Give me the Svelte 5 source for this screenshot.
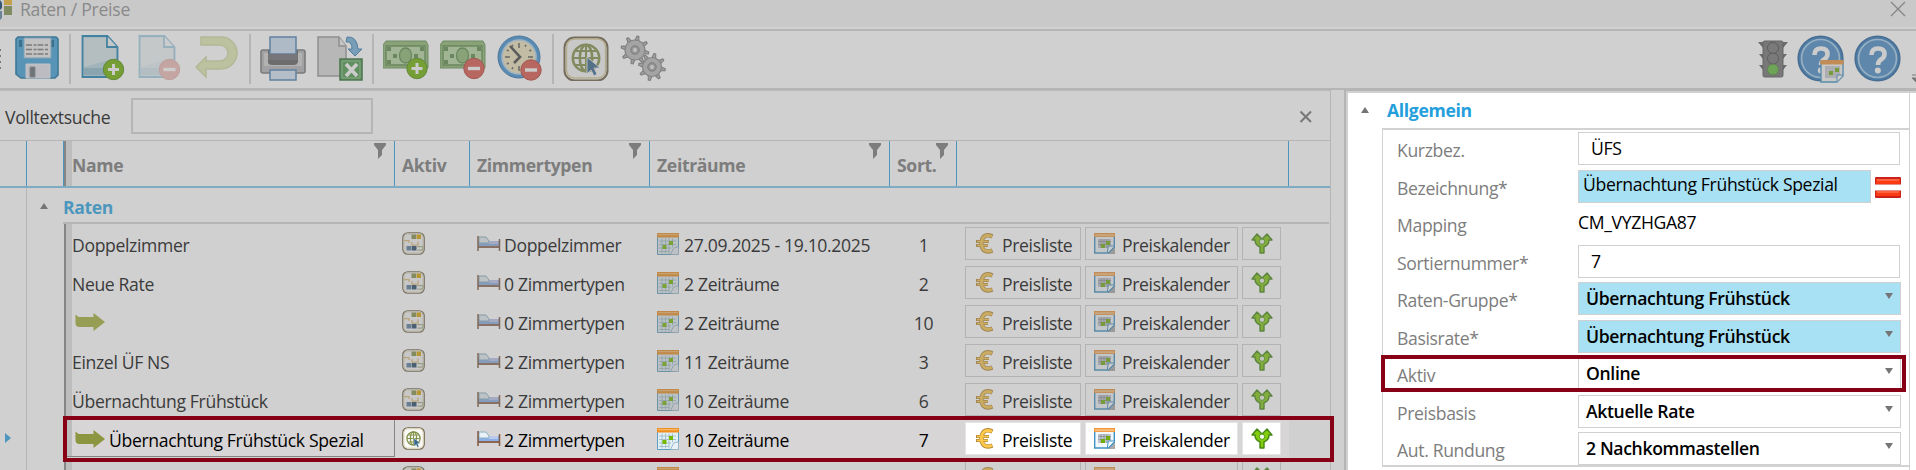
<script>
    const columns = [
        { key: 'name', label: 'Name', filter: true },
        { key: 'aktiv', label: 'Aktiv' },
        { key: 'zimmer', label: 'Zimmertypen', filter: true },
        { key: 'zeit', label: 'Zeiträume', filter: true },
        { key: 'sort', label: 'Sort.', filter: true },
        { key: 'actions', label: '' }
    ]

    const rates = [
        { name: 'Doppelzimmer', zimmer: 'Doppelzimmer', zeit: '27.09.2025 - 19.10.2025', sort: 1 },
        { name: 'Neue Rate', zimmer: '0 Zimmertypen', zeit: '2 Zeiträume', sort: 2 },
        { name: '', child: true, zimmer: '0 Zimmertypen', zeit: '2 Zeiträume', sort: 10 },
        { name: 'Einzel ÜF NS', zimmer: '2 Zimmertypen', zeit: '11 Zeiträume', sort: 3 },
        { name: 'Übernachtung Frühstück', zimmer: '2 Zimmertypen', zeit: '10 Zeiträume', sort: 6 },
        { name: 'Übernachtung Frühstück Spezial', child: true, online: true, zimmer: '2 Zimmertypen', zeit: '10 Zeiträume', sort: 7 },
        { name: '', zimmer: '', zeit: '', sort: '' }
    ]

    const tools = [
        'save', '|', 'new', 'delete', 'undo', '|', 'print', 'export', '|',
        'moneyAdd', 'moneyRemove', 'clock', '|', 'online', 'gears'
    ]

    const fields = [
        { label: 'Kurzbez.', value: 'ÜFS', type: 'text' },
        { label: 'Bezeichnung*', value: 'Übernachtung Frühstück Spezial', type: 'lang' },
        { label: 'Mapping', value: 'CM_VYZHGA87', type: 'plain' },
        { label: 'Sortiernummer*', value: '7', type: 'text' },
        { label: 'Raten-Gruppe*', value: 'Übernachtung Frühstück', type: 'select', required: true },
        { label: 'Basisrate*', value: 'Übernachtung Frühstück', type: 'select', required: true },
        { label: 'Aktiv', value: 'Online', type: 'select', marked: true },
        { label: 'Preisbasis', value: 'Aktuelle Rate', type: 'select' },
        { label: 'Aut. Rundung', value: '2 Nachkommastellen', type: 'select' }
    ]

    let selected = $state(5)

    // teeth of the gear wheels, in degrees
    const teeth = [0, 45, 90, 135, 180, 225, 270, 315]
    const ticks = [0, 30, 60, 90, 120, 150, 180, 210, 240, 270, 300, 330]
</script>

{#snippet plus(x, y)}
    <circle cx={x} cy={y} r="10.2" fill="#6eb300" stroke="#4d8c0a" />
    <path d="M{x - 5.5} {y}h11M{x} {y - 5.5}v11" stroke="#fff" stroke-width="3" fill="none" />
{/snippet}

{#snippet minus(x, y)}
    <circle cx={x} cy={y} r="10.2" fill="#dd5648" stroke="#b83a30" />
    <path d="M{x - 6} {y}h12" stroke="#fff" stroke-width="3.4" fill="none" />
{/snippet}

{#snippet banknote()}
    <path d="M3 6h40l2 4v23h-45v-23z" fill="#8fba72" stroke="#63944f" />
    <path d="M3 11h39v19h-39z" fill="#b8d9a0" stroke="#5b8c49" stroke-width="1.4" />
    <path d="M4 12h4v4h-4zM37 12h4v4h-4zM4 25h4v4h-4zM10 19h4v4h-4zM31 19h4v4h-4z" fill="#5b8c49" />
    <ellipse cx="22.5" cy="20.5" rx="6" ry="7.5" fill="#8fba72" stroke="#5b8c49" stroke-width="1.3" />
{/snippet}

{#snippet gear(x, y, r)}
    {#each teeth as angle}
        <path
            d="M{x - 2} {y - r + 1}l1 -5h2l1 5z"
            transform="rotate({angle + 12} {x} {y})"
            fill="#b5b5b5"
            stroke="#777" />
    {/each}
    <circle cx={x} cy={y} {r} fill="#bdbdbd" stroke="#888" stroke-width="1.2" />
    <circle cx={x} cy={y} r="4.2" fill="#a5a5a5" stroke="#777" />
    <circle cx={x} cy={y} r="1.9" fill="#eee" />
{/snippet}

{#snippet globe()}
    <g fill="none" stroke="#84934a" stroke-width="2.6">
        <circle cx="23" cy="23" r="13.2" />
        <ellipse cx="23" cy="23" rx="6.2" ry="13" />
        <path d="M23 10v26M10 23h26M12.5 16h21M12.5 30h21" stroke-width="2.1" />
    </g>
    <path d="M24 22v17l4-4 3 6 3-2-3-6h6z" fill="#38678d" stroke="#fff" stroke-width=".8" />
{/snippet}

{#snippet toolIcon(name)}
    <svg class="tool-icon {name}" viewBox="0 0 46 46" width="46" height="46">
        {#if name === 'save'}
            <path d="M4 2h38l2 2v36l-3 3h-34l-5-4v-35z" fill="#3ba2db" stroke="#1272a8" stroke-width="1.6" />
            <path d="M5 5h3v7h-3zM37 5h3v7h-3z" fill="#0e6597" />
            <path d="M10 3h27v20h-27z" fill="#f0f0f2" stroke="#7fb9db" />
            <path d="M12 10h22M12 14.500h22M12 19h22" stroke="#777" stroke-width="1.6" stroke-dasharray="6 1.500 3 1" />
            <path d="M12 29h24v14h-24z" fill="#e4e4ee" stroke="#e9f3fa" />
            <path d="M16 32h5v10h-5z" fill="#626b73" stroke="#888" />
        {:else if name === 'new' || name === 'delete'}
            <path d="M2.500 1h25l10 11v30h-35z" fill="#b9d8e3" stroke="#1b83b8" stroke-width="1.8" />
            <path d="M4 3h22v10h10v10l-32 9z" fill="#d8e9ed" />
            <path d="M4 33h32v7h-32z" fill="#91bfd1" />
            <path d="M27 1v11h10" fill="#f4fafc" stroke="#1b83b8" stroke-width="1.8" />
            {#if name === 'new'}{@render plus(33.5, 34.5)}{:else}{@render minus(32.5, 34.5)}{/if}
        {:else if name === 'undo'}
            <path d="M7 2h20a16 16 0 0 1 0 32h-15v8l-10-10 10-10v4h14a8 8 0 0 0 0-16h-19z" fill="#cde077" stroke="#a9bf54" stroke-width="1.5" />
        {:else if name === 'print'}
            <rect x="1" y="15" width="44" height="23" rx="2" fill="#b9b9bb" stroke="#777" stroke-width="1.6" />
            <path d="M4 18h38v13h-38z" fill="#d5d5d7" />
            <path d="M8 15h30v12q-1 3-4 3h-22q-4 0-4-3z" fill="#606062" />
            <path d="M10 2h26v17h-26z" fill="#cfe3f6" stroke="#4c83b8" stroke-width="1.5" />
            <path d="M8 19h30v6h-30z" fill="#707072" />
            <path d="M10 35h26v10h-26z" fill="#d9eafa" stroke="#4c83b8" stroke-width="1.5" />
        {:else if name === 'export'}
            <path d="M1 2h21l7 9v30h-28z" fill="#dedede" stroke="#999" stroke-width="1.5" />
            <path d="M22 2v9h7" fill="#f5f5f5" stroke="#999" stroke-width="1.5" />
            <path d="M30 2q10-1 11 12h4l-7 7-7-7h4q0-8-6-7z" fill="#72b1dd" stroke="#397daf" />
            <path d="M23 24h22v21h-22z" fill="#4c9b4a" stroke="#2f7334" stroke-width="1.6" />
            <path d="M25 26h18v17h-18z" fill="none" stroke="#8cc48a" />
            <path d="M29 29l11 12M40 29l-11 12" stroke="#fff" stroke-width="3.6" />
        {:else if name === 'moneyAdd'}
            {@render banknote()}{@render plus(34, 33.5)}
        {:else if name === 'moneyRemove'}
            {@render banknote()}{@render minus(34, 33.5)}
        {:else if name === 'clock'}
            <circle cx="22" cy="22" r="21" fill="#3e93d6" stroke="#2670ad" />
            <circle cx="22" cy="22" r="17" fill="#efe6bb" stroke="#b6d8f2" stroke-width="1.6" />
            {#each ticks as angle}
                <path d="M22 8v{angle % 90 ? 2 : 5}" transform="rotate({angle} 22 22)" stroke="#555" stroke-width="1.5" />
            {/each}
            <path d="M13 11l10 11-6 6" fill="none" stroke="#444" stroke-width="2.6" />
            {@render minus(34, 35)}
        {:else if name === 'online'}
            <rect x="1.500" y="2.500" width="43" height="43" rx="10" fill="#fff" stroke="#6d6247" stroke-width="2" />
            <rect x="3.500" y="4" width="39" height="39" rx="8" fill="#fbfbfb" stroke="#dccd96" stroke-width="1.4" />
            {@render globe()}
        {:else if name === 'gears'}
            {@render gear(15, 15, 10)}{@render gear(32, 32, 9.5)}
        {/if}
    </svg>
{/snippet}

{#snippet calendar(size)}
    <svg class="icon" viewBox="0 0 22 22" width={size} height={size}>
        <path d="M.5.500h21v15l-6 6h-15z" fill="#e2f0f6" stroke="#5d9fc2" />
        <path d="M0 0h22v4.500h-22z" fill="#ef8f1f" />
        <path d="M1 1.700h20" stroke="#fbc27a" />
        <path d="M2 8h17M2 11.500h17M2 15h12M2 18.500h10M5 5.500v15M8.500 5.500v15M12 5.500v15M15.500 5.500v9" stroke="#a3bcc7" stroke-width=".9" />
        <path d="M12 8h4v4h-4zM5.500 12h4v4h-4z" fill="#74b800" />
        <path d="M21.500 14q-4 0-5 1.500l-3 6h8z" fill="#e9f1f6" stroke="#86abc0" stroke-width=".8" />
    </svg>
{/snippet}

{#snippet sheet(size)}
    <svg class="icon" viewBox="0 0 21 21" width={size} height={size}>
        <path d="M14 14h7v7h-7z" fill="#aaa" />
        <path d="M.7 1h19.600v13l-6 6h-13.600z" fill="#f2f9fd" stroke="#3f92c4" stroke-width="1.4" />
        <path d="M0 0h21v4h-21z" fill="#ef9437" />
        <path d="M1 2.200h19" stroke="#f9c080" stroke-width="2" />
        <path d="M4 6h13v9h-13z" fill="#c1c4ca" />
        <path d="M4 8.500h13M4 11.500h13M7 6v9M10 6v9M13 6v9" stroke="#888e99" stroke-width=".7" />
        <path d="M12 8h4v4h-4zM7 11h4v4h-4z" fill="#6fae0a" />
        <path d="M20.300 13h-6l-1 7" fill="#fff" stroke="#3f92c4" />
    </svg>
{/snippet}

{#snippet arrow()}
    <svg class="child-arrow" viewBox="0 0 30 18" width="30" height="18">
        <path d="M.5 1.500l3 2.500h15v-4l11.500 9-11.500 9v-4h-14q-4 0-4-4z" fill="#8c953f" />
    </svg>
{/snippet}

{#snippet help(withCalendar)}
    <svg class="help" viewBox="0 0 48 48" width="48" height="48">
        <circle cx="23.500" cy="23.500" r="22.300" fill="#2c7bbf" stroke="#24609f" stroke-width="1.6" />
        <circle cx="23.500" cy="23.500" r="19" fill="#468dc9" stroke="#a9d1ef" stroke-width="1.7" />
        <path d="M17.500 20q0-6.500 6.500-6.500t6.500 5.500q0 3.500-3.500 5.500-3 2-3 5.500" fill="none" stroke="#fff" stroke-width="4.6" />
        <circle cx="23.800" cy="35.500" r="3" fill="#fff" />
        {#if withCalendar}
            <path d="M24 26h22v15l-6 6h-16z" fill="#fafafa" stroke="#3f92c4" stroke-width="1.4" />
            <path d="M23.500 25h23v4.500h-23z" fill="#ef9437" />
            <path d="M28 31h15v12h-15z" fill="#c9ccd1" />
            <path d="M38 33h4v4h-4zM32 36h4v4h-4z" fill="#6fae0a" />
            <path d="M46 40h-6v7" fill="#fff" stroke="#3f92c4" />
        {/if}
    </svg>
{/snippet}

<div class="window">
    <header class="titlebar">
        <svg class="logo" viewBox="0 0 13 21" width="13" height="21">
            <path d="M0 0l2 3v5l-2 2z" fill="#375772" />
            <path d="M4 0h8v5h-8z" fill="#c3a04b" />
            <path d="M4 6h8v9h-8z" fill="#808b61" />
            <path d="M0 11h2v7l-2 2z" fill="#6d8496" />
        </svg>
        <span>Raten / Preise</span>
        <svg class="close" viewBox="0 0 16 16" width="16" height="16">
            <path d="M1 1l14 14M15 1l-14 14" stroke="#858585" stroke-width="1.300" />
        </svg>
    </header>

    <nav class="toolbar">
        <span class="grip"><i></i><i></i><i></i><i></i></span>
        {#each tools as tool}
            {#if tool === '|'}
                <span class="separator"></span>
            {:else}
                {@render toolIcon(tool)}
            {/if}
        {/each}
        <div class="toolbar-right">
            <svg class="traffic" viewBox="0 0 30 40" width="30" height="40">
                <path d="M0 2h30l-5 6v-1h-20v1zM1 14h28l-4 5h-20zM1 25h28l-4 5h-20z" fill="#5d5d5d" />
                <rect x="5" y="1" width="20" height="36" rx="1.500" fill="#727272" stroke="#555" />
                <circle cx="15" cy="8" r="5.500" fill="#777" stroke="#444" />
                <circle cx="15" cy="18.500" r="5.500" fill="#777" stroke="#444" />
                <circle cx="15" cy="29.500" r="5.500" fill="#63bd3a" stroke="#4f7f3c" />
            </svg>
            {@render help(true)}
            {@render help(false)}
            <svg class="overflow" viewBox="0 0 4 8" width="4" height="8">
                <path d="M0 1h4M0 4l4 4v-4z" stroke="#777" fill="#777" />
            </svg>
        </div>
    </nav>

    <main>
        <section class="list">
            <div class="search">
                <label for="search">Volltextsuche</label>
                <input id="search" type="text" />
                <svg viewBox="0 0 14 14" width="14" height="14">
                    <path d="M1.500 1.500l10.500 10.500M12 1.500l-10.500 10.500" stroke="#777" stroke-width="2" />
                </svg>
            </div>

            <div class="grid head">
                <span></span>
                <span></span>
                {#each columns as column}
                    <span class="th {column.key}">
                        {column.label}
                        {#if column.filter}
                            <svg class="filter" viewBox="0 0 12 16" width="12" height="16">
                                <path d="M0 0h12v2l-4 5v5l-4 4v-9l-4-5z" fill="#7d7d7d" />
                            </svg>
                        {/if}
                    </span>
                {/each}
                <span></span>
            </div>

            <div class="group">
                <span class="gutter"></span>
                <i class="collapse"></i>
                <strong>Raten</strong>
            </div>

            {#each rates as rate, i}
                <!-- svelte-ignore a11y_click_events_have_key_events, a11y_no_static_element_interactions -->
                <div class="grid row" class:selected={i === selected} onclick={() => (selected = i)}>
                    <span class="gutter">{#if i === selected}<i class="pointer"></i>{/if}</span>
                    <span></span>
                    <span class="cell name">
                        {#if rate.child}{@render arrow()}{/if}
                        {rate.name}
                    </span>
                    <span class="cell aktiv">
                        <svg class="icon" viewBox="0 0 46 46" width="23" height="23">
                            <rect x="1.500" y="1.500" width="43" height="43" rx="10" fill="#fff" stroke="#71684e" stroke-width="2.400" />
                            <rect x="4" y="4" width="38" height="38" rx="7" fill="#fafafa" stroke="#dcd1ac" stroke-width="1.500" />
                            {#if rate.online}
                                {@render globe()}
                            {:else}
                                <path d="M19 5h9v9h-9z" fill="#84934a" />
                                <path d="M29 5h9v9h-9z" fill="#dda600" />
                                <path d="M4 17h10v5M20 20v6h12v-7" stroke="#e3bd78" stroke-width="2.500" fill="none" />
                                <path d="M9 28h10v9h-10z" fill="#5a7f9e" />
                                <path d="M20 28h9v9h-9z" fill="#234868" />
                                <path d="M31 29h12M31 36h9l3-5" stroke="#a9b486" stroke-width="2.500" fill="none" />
                            {/if}
                        </svg>
                    </span>
                    <span class="cell zimmer">
                        <svg class="icon bed" viewBox="0 0 24 15" width="24" height="15">
                            <path d="M1 5h21v6h-21z" fill="#8ab0e8" />
                            <path d="M12 5h9v3h-9z" fill="#bcc8f0" />
                            <path d="M2 1h7l3 4v2h-10z" fill="#e7f1f6" stroke="#8bb0c4" />
                            <path d="M1 11h22" stroke="#8e6550" stroke-width="2" />
                            <path d="M1 0v15M22.500 3v12" stroke="#80583f" stroke-width="1.500" />
                        </svg>
                        {rate.zimmer}
                    </span>
                    <span class="cell zeit">{@render calendar(22)}{rate.zeit}</span>
                    <span class="cell sort">{rate.sort}</span>
                    <span class="cell actions">
                        <button class="pricelist">
                            <svg class="icon" viewBox="0 0 18 21" width="18" height="21">
                                <g fill="none">
                                    <path d="M16.500 3.500q-9-4-11 5v4q2 8.500 11 5" stroke="#b98a35" stroke-width="4.400" />
                                    <path d="M0 8.500h13M0 12.500h12" stroke="#b98a35" stroke-width="3" />
                                    <path d="M16 3.500q-8.500-3.500-10.500 5v4q2 8 10.500 5" stroke="#fcc94d" stroke-width="2.800" />
                                    <path d="M1 8.500h12M1 12.500h11" stroke="#fcc94d" stroke-width="1.500" />
                                </g>
                            </svg>
                            Preisliste
                        </button>
                        <button class="pricecal">{@render sheet(21)}Preiskalender</button>
                        <button class="split" aria-label="Aufteilen">
                            <svg class="icon" viewBox="0 0 22 21" width="22" height="21">
                                <path d="M1 7l5-6 5 5 5-5 5 6h-3q0 5-5 7v6h-4v-6q-5-2-5-7z" fill="#84cc0c" stroke="#448815" stroke-width="1.400" stroke-linejoin="round" />
                                <circle cx="11" cy="8.700" r="2.700" fill="#f3f8e8" stroke="#4f9a15" />
                            </svg>
                        </button>
                    </span>
                </div>
            {/each}
            <div class="marker row-marker"></div>
        </section>

        <aside class="details">
            <h2><i class="collapse"></i>Allgemein</h2>
            <div class="form">
                {#each fields as field}
                    <div class="field">
                        <span class="label">{field.label}</span>
                        <span class="control {field.type}" class:required={field.required}>
                            {field.value}
                            {#if field.type === 'select'}<i class="caret"></i>{/if}
                        </span>
                        {#if field.type === 'lang'}
                            <svg class="flag" viewBox="0 0 26 21" width="26" height="21">
                                <rect width="26" height="21" rx="1" fill="#c9201a" />
                                <path d="M1 2h24v5h-24zM1 14h24v5h-24z" fill="#fb3a14" />
                                <path d="M2 3h22M2 15h22" stroke="#ff8a6e" />
                                <path d="M0 7.500h26v6h-26z" fill="#fff" />
                            </svg>
                        {/if}
                        {#if field.marked}<div class="marker field-marker"></div>{/if}
                    </div>
                {/each}
            </div>
        </aside>
    </main>
</div>

<style>
    :global(body) {
        overflow: hidden;
    }

    .window {
        width: 1916px;
        height: 470px;
        overflow: hidden;
        display: flex;
        flex-direction: column;
        background: #d0d0d0;
        color: #3b3b3b;
        font-family: 'Open Sans', 'Noto Sans', sans-serif;
        font-size: 17.6px;
        letter-spacing: -0.35px;
        white-space: nowrap;
    }

    .window :global(svg) {
        flex: none;
        display: block;
    }

    .titlebar {
        box-sizing: border-box;
        height: 31px;
        display: flex;
        align-items: flex-start;
        background: linear-gradient(#c9c9c9 27px, #d2d2d2 27px);
        border-bottom: 2px solid #b5b5b5;
        color: #8a8a8a;
        line-height: 18px;
    }

    .titlebar span {
        margin-left: 7px;
        letter-spacing: -0.25px;
    }

    .close {
        margin: 1px 10px 0 auto;
    }

    .toolbar {
        box-sizing: border-box;
        height: 59px;
        padding: 4px 0 0;
        display: flex;
        gap: 11px;
        border-bottom: 2px solid #b5b5b5;
    }

    .grip {
        width: 3px;
        padding-top: 14px;
        display: flex;
        flex-direction: column;
        gap: 4px;
    }

    .grip i {
        width: 1px;
        height: 2px;
        background: #777;
    }

    .separator {
        width: 2px;
        height: 50px;
        margin: -1px -2px 0;
        background: #b5b5b5;
    }

    .tool-icon,
    .toolbar-right,
    .icon {
        filter: contrast(0.59);
    }

    .delete {
        opacity: 0.4;
    }

    .undo {
        opacity: 0.55;
    }

    .toolbar-right {
        margin-left: auto;
        display: flex;
        gap: 9px;
    }

    .traffic {
        margin-top: 5px;
    }

    .overflow {
        margin: 39px 0 0 1px;
    }

    main {
        flex: 1;
        min-height: 0;
        display: flex;
    }

    .list {
        position: relative;
        z-index: 1;
        box-sizing: border-box;
        width: 1331px;
        border-top: 1px solid #b9b9b9;
        border-right: 1px solid #b5b5b5;
    }

    .search {
        box-sizing: border-box;
        height: 50px;
        padding-left: 5px;
        display: flex;
        align-items: center;
        border-bottom: 1px solid #b5b5b5;
    }

    .search label {
        width: 126px;
        padding-top: 2px;
    }

    .search input {
        box-sizing: border-box;
        width: 242px;
        height: 36px;
        border: 2px solid #b5b5b5;
        background: #d0d0d0;
    }

    .search svg {
        margin: 2px 17px 0 auto;
    }

    .grid {
        display: grid;
        grid-template-columns: 27px 37px 331px 75px 180px 240px 67px 332px 41px;
    }

    .head {
        box-sizing: border-box;
        height: 47px;
        border-bottom: 2px solid #7fabc2;
        color: #7d7d7d;
        font-weight: 700;
        line-height: 49px;
    }

    .head > span {
        position: relative;
        height: 45px;
        border-right: 1px solid #4d97be;
    }

    .head > span:last-child {
        border: 0;
    }

    .th {
        padding-left: 7px;
    }

    .th.name {
        padding-left: 0;
        display: flex;
    }

    .name::before {
        content: '';
        flex: none;
        width: 6px;
        border-left: 2px solid #858585;
        background: #bdbdbd;
        align-self: stretch;
    }

    .filter {
        position: absolute;
        top: 2px;
        right: 8px;
    }

    .group {
        height: 36px;
        display: flex;
        align-items: center;
        background: linear-gradient(#b5b5b5, #b5b5b5) 63px 34px / 1266px 2px no-repeat;
    }

    .group strong {
        padding-top: 2px;
        color: #4d97be;
    }

    .group .collapse {
        margin: 0 15px 0 13px;
    }

    .collapse {
        width: 0;
        border: 4.5px solid transparent;
        border-top: 0;
        border-bottom: 6px solid #757575;
    }

    .gutter {
        box-sizing: border-box;
        width: 27px;
        align-self: stretch;
        border-right: 1px solid #b5b5b5;
    }

    .row {
        height: 39px;
        line-height: 36px;
    }

    .pointer {
        display: block;
        width: 0;
        margin: 14px 0 0 5px;
        border: 5px solid transparent;
        border-right: 0;
        border-left: 6px solid #4d97be;
    }

    .cell {
        box-sizing: border-box;
        display: flex;
        align-items: center;
        min-width: 0;
        height: 39px;
        padding-top: 3px;
    }

    .cell .icon {
        margin-top: -3px;
    }

    .cell.name::before {
        margin-top: -3px;
    }

    .child-arrow {
        margin: -2px 3px 0 3px;
        opacity: 0.85;
    }

    .aktiv {
        padding-left: 7px;
    }

    .zimmer {
        padding-left: 7px;
        gap: 3px;
    }

    .zeit {
        padding-left: 7px;
        gap: 5px;
    }

    .cell.sort {
        justify-content: center;
    }

    .cell.actions {
        padding-top: 0;
        padding-left: 8px;
        gap: 4px;
    }

    button {
        box-sizing: border-box;
        height: 33px;
        display: flex;
        align-items: center;
        padding: 3px 8px 0;
        border: 1px solid #b3b3b3;
        background: #d0d0d0;
        color: inherit;
        font: inherit;
        letter-spacing: inherit;
        line-height: 28px;
    }

    .pricelist {
        width: 116px;
        padding-left: 10px;
        gap: 8px;
    }

    .pricecal {
        width: 153px;
        gap: 7px;
    }

    .split {
        width: 39px;
    }

    .selected {
        color: #000;
    }

    .selected > .cell,
    .selected > span:last-child {
        background: #d8d5d6;
    }

    .selected .cell.name {
        margin-left: 3px;
        border: 1px solid #858585;
        border-width: 1px 1px 1px 0;
        height: 38px;
    }

    .selected .cell.name::before {
        width: 5px;
        border: 0;
    }

    .selected .icon {
        filter: none;
    }

    .selected .child-arrow {
        opacity: 1;
        margin-right: 4px;
    }

    .selected button {
        background: #fff;
        border-color: #e5e5e5;
    }

    .marker {
        position: absolute;
        box-sizing: border-box;
        border: 4px solid #870016;
        pointer-events: none;
    }

    .row-marker {
        left: 63px;
        top: 325px;
        width: 1271px;
        height: 46px;
    }

    .details {
        box-sizing: border-box;
        flex: 1;
        margin-left: 13px;
        border-left: 2px solid #b5b5b5;
        border-top: 1px solid #b5b5b5;
        background: linear-gradient(#d0d0d0, #d0d0d0) 563px 0 / 1px 100% no-repeat,
            linear-gradient(90deg, #d0d0d0 2px, transparent 2px),
            linear-gradient(#d0d0d0 2px, #fff 2px);
    }

    h2 {
        margin: 0;
        height: 37px;
        padding-left: 15px;
        display: flex;
        align-items: center;
        gap: 18px;
        color: #249fdc;
        font-size: inherit;
    }

    .form {
        box-sizing: border-box;
        width: 527px;
        height: 339px;
        margin-left: 36px;
        border-top: 2px solid #d2d2d2;
        border-left: 1px solid #d2d2d2;
        border-bottom: 2px solid #d2d2d2;
    }

    .field {
        position: relative;
        height: 37.5px;
        padding-left: 14px;
        display: flex;
        align-items: center;
    }

    .label {
        width: 181px;
        padding-top: 3px;
        color: #7d7d7d;
        font-weight: 500;
    }

    .control {
        box-sizing: border-box;
        width: 322px;
        height: 33px;
        border: 1.500px solid #d0d0d0;
        color: #000;
        line-height: 31px;
    }

    .control.text {
        padding-left: 12px;
    }

    .control.lang {
        width: 293px;
        padding-left: 4px;
        background: #a8e1f3;
        line-height: 26px;
    }

    .control.plain {
        border: 0;
    }

    .control.select {
        width: 323px;
        padding: 0 7px;
        display: flex;
        align-items: center;
        justify-content: space-between;
        font-weight: 600;
    }

    .control.required {
        background: #a8e1f3;
    }

    .caret {
        margin-top: -5px;
        border: 4.500px solid transparent;
        border-bottom: 0;
        border-top: 6px solid #757575;
    }

    .flag {
        margin: 2px 0 0 4px;
    }

    .field-marker {
        left: -2px;
        top: 0;
        width: 525px;
        height: 37px;
    }
</style>
